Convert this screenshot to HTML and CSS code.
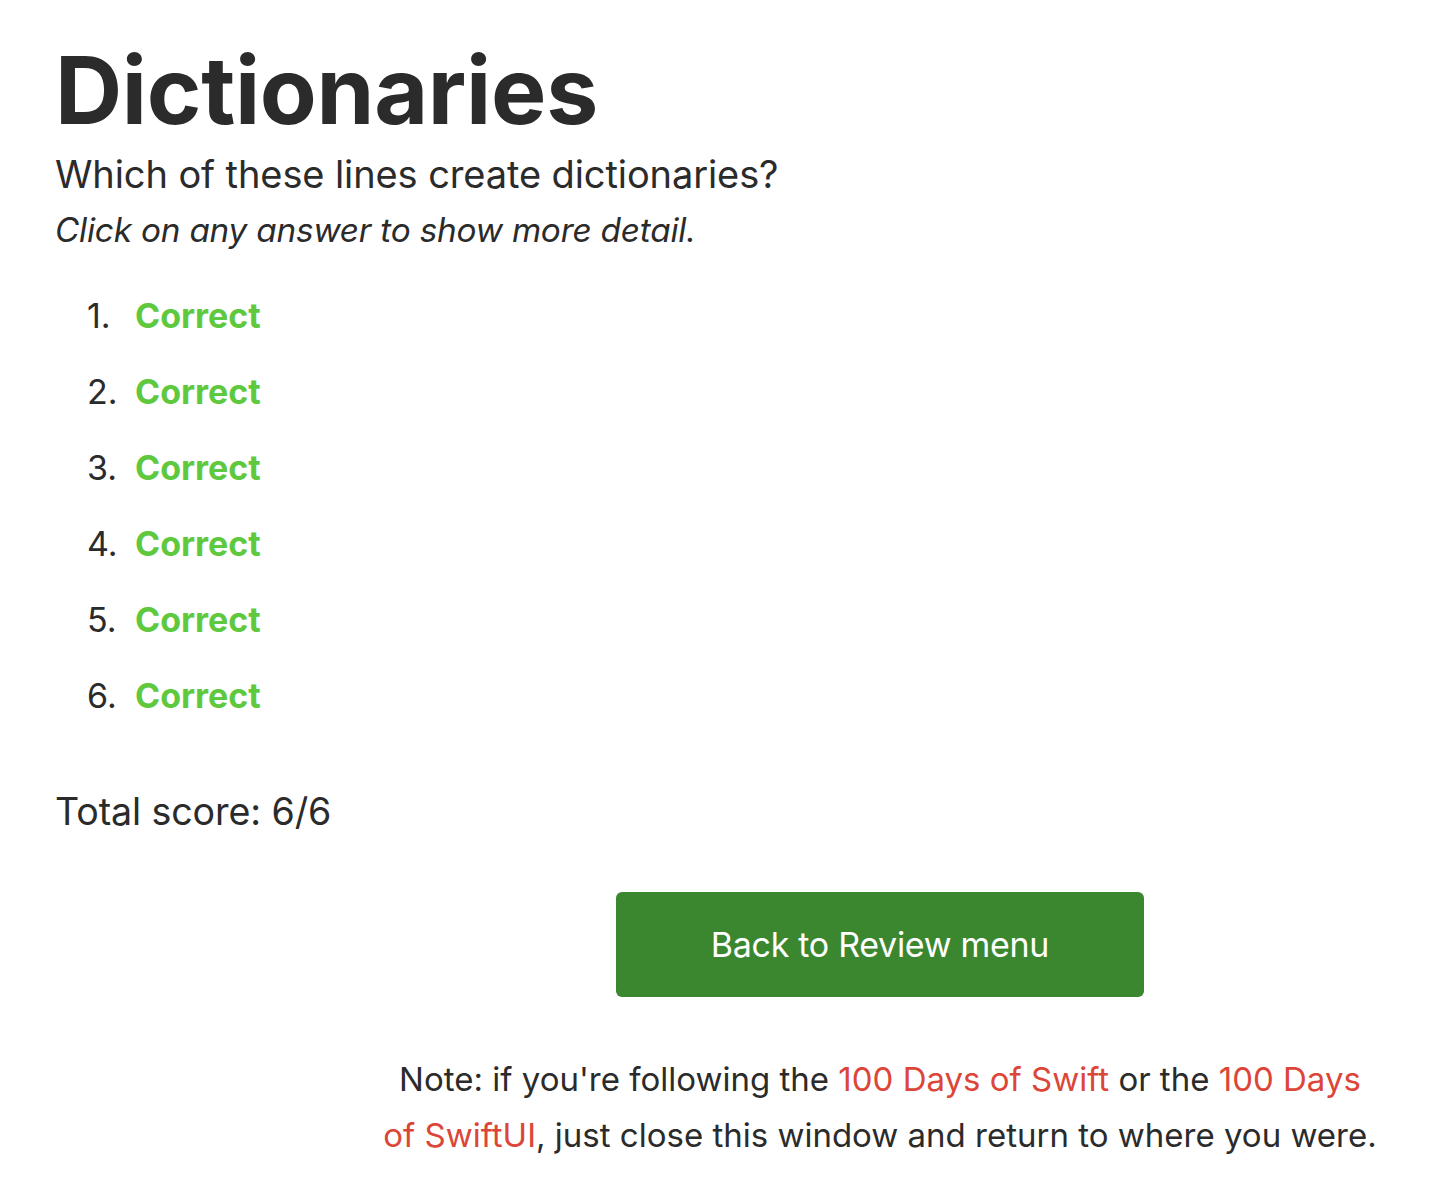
FILE: index.html
```html
<!DOCTYPE html>
<html lang="en">
<head>
<meta charset="utf-8">
<title>Dictionaries</title>
<link rel="stylesheet" href="styles.css">
</head>
<body>
<main class="page">
  <h1 class="title">Dictionaries</h1>
  <p class="question">Which of these lines create dictionaries?</p>
  <p class="hint">Click on any answer to show more detail.</p>
  <ol class="answers">
    <li><span class="correct">Correct</span></li>
    <li><span class="correct">Correct</span></li>
    <li><span class="correct">Correct</span></li>
    <li><span class="correct">Correct</span></li>
    <li><span class="correct">Correct</span></li>
    <li><span class="correct">Correct</span></li>
  </ol>
  <p class="score">Total score: 6/6</p>
  <div class="footer-row">
    <div class="footer-col">
      <a class="back-btn" href="#">Back to Review menu</a>
      <p class="note">Note: if you're following the <a href="#">100 Days of Swift</a> or the <a href="#">100 Days of&nbsp;SwiftUI</a>, just close this window and return to where you were.</p>
    </div>
  </div>
</main>
</body>
</html>
```
FILE: styles.css
```css
html, body {
  margin: 0;
  padding: 0;
  background: #ffffff;
}
body {
  font-family: Inter, "Noto Sans", "Liberation Sans", sans-serif;
  color: #2b2b2b;
}
.page {
  padding: 34px 0 0 55px;
}
.title {
  margin: 0;
  font-size: 93px;
  font-weight: 700;
  line-height: 112px;
  letter-spacing: -0.3px;
}
.question {
  margin: 0;
  font-size: 38px;
  line-height: 56px;
  letter-spacing: -0.1px;
}
.hint {
  margin: 0;
  font-size: 33.3px;
  font-style: italic;
  line-height: 56px;
  letter-spacing: -0.2px;
}
.answers {
  list-style: none;
  counter-reset: ans;
  margin: 34px 0 0 0;
  padding-left: 32px;
  font-size: 34px;
  line-height: 48px;
}
.answers li {
  counter-increment: ans;
  display: flex;
  margin-bottom: 28px;
}
.answers li::before {
  content: counter(ans) ".";
  width: 48px;
  flex: none;
}
.correct {
  color: #5ec93e;
  font-weight: 700;
}
.score {
  margin: 64px 0 0 0;
  font-size: 37.6px;
  line-height: 56px;
  letter-spacing: -0.1px;
}
.footer-row {
  display: flex;
  justify-content: flex-end;
  padding-right: 62px;
  margin-top: 52px;
}
.footer-col {
  width: 1020px;
  display: flex;
  flex-direction: column;
  align-items: center;
}
.back-btn {
  display: flex;
  align-items: center;
  justify-content: center;
  width: 528px;
  height: 105px;
  box-sizing: border-box;
  background: #3b8730;
  border-radius: 6px;
  color: #ffffff;
  font-size: 34px;
  text-decoration: none;
  letter-spacing: -0.3px;
}
.note {
  margin: 54px 0 0 0;
  text-align: center;
  font-size: 33px;
  line-height: 56px;
  letter-spacing: 0;
}
.note a {
  color: #dc4638;
  text-decoration: none;
}
```
